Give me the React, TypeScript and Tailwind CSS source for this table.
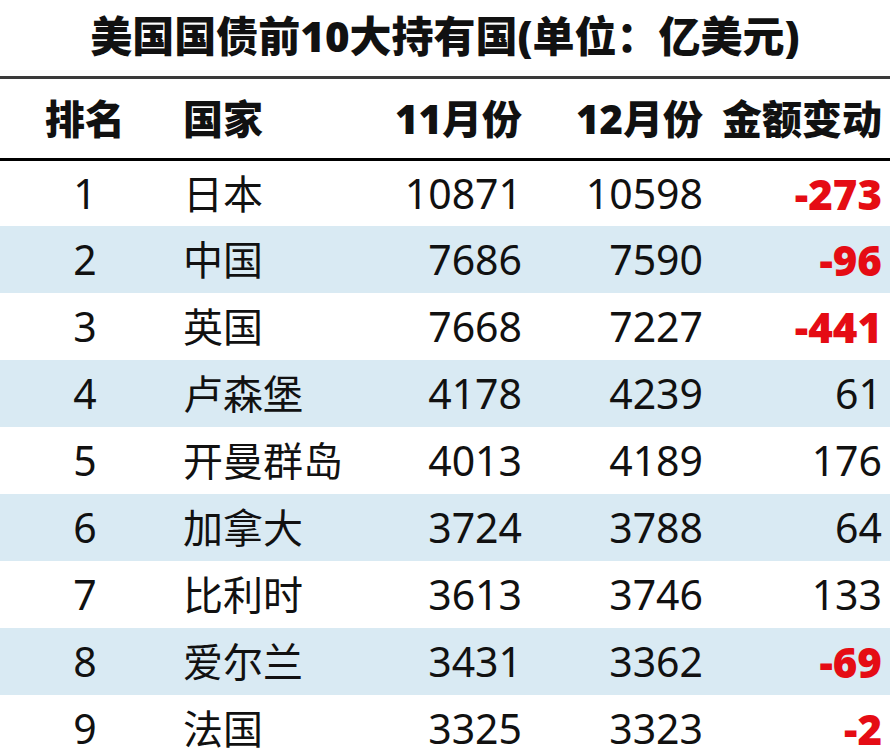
import React from "react";

const rows: [string, string, string, string, string][] = [
  ["1", "日本", "10871", "10598", "-273"],
  ["2", "中国", "7686", "7590", "-96"],
  ["3", "英国", "7668", "7227", "-441"],
  ["4", "卢森堡", "4178", "4239", "61"],
  ["5", "开曼群岛", "4013", "4189", "176"],
  ["6", "加拿大", "3724", "3788", "64"],
  ["7", "比利时", "3613", "3746", "133"],
  ["8", "爱尔兰", "3431", "3362", "-69"],
  ["9", "法国", "3325", "3323", "-2"],
];

const font = { fontFamily: '"Noto Sans", "Noto Sans CJK SC", sans-serif' };

export default function App() {
  return (
    <div
      className="w-[890px] h-[755px] overflow-hidden bg-white text-[#111]"
      style={font}
    >
      <div className="h-[76px] pb-[4px] flex items-center justify-center text-[42px] font-black leading-none">
        美国国债前10大持有国(单位：亿美元)
      </div>
      <div className="h-[3px] bg-[#3a3a3a]" />
      <div className="h-[79px] flex items-center text-[40px] font-black leading-none">
        <div className="w-[170px] text-center">排名</div>
        <div className="w-[200px] ml-[13px]">国家</div>
        <div className="w-[139px] text-right">11月份</div>
        <div className="w-[181px] text-right">12月份</div>
        <div className="w-[179px] text-right">金额变动</div>
      </div>
      <div className="h-[3px] bg-black" />
      {rows.map((r, i) => {
        const neg = r[4].startsWith("-");
        return (
          <div
            key={r[0]}
            className={`flex items-center text-[41px] leading-none ${
              i === 0 ? "h-[65px]" : "h-[67px]"
            } ${i % 2 === 1 ? "bg-[#d9eaf3]" : "bg-white"}`}
          >
            <div className="w-[170px] text-center">{r[0]}</div>
            <div className="w-[200px] ml-[13px] text-[40px]">{r[1]}</div>
            <div className="w-[139px] text-right">{r[2]}</div>
            <div className="w-[181px] text-right">{r[3]}</div>
            <div
              className={`w-[179px] text-right ${
                neg ? "text-[#e50c14] font-black text-[42px]" : ""
              }`}
            >
              {r[4]}
            </div>
          </div>
        );
      })}
    </div>
  );
}
